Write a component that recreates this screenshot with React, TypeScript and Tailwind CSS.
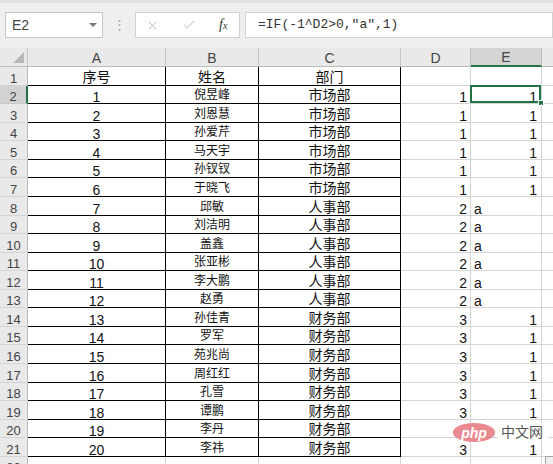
import { X, Check } from 'lucide-react';

interface SheetRow {
  no: string;
  name: string;
  dept: string;
  d: string;
  e: string;
}

const names = [
  '倪昱峰', '刘恩慧', '孙爱芹', '马天宇', '孙钗钗', '于晓飞',
  '邱敏', '刘洁明', '盖鑫', '张亚彬', '李大鹏', '赵勇',
  '孙佳青', '罗军', '苑兆尚', '周红红', '孔雪', '谭鹏', '李丹', '李祎',
];

const rows: SheetRow[] = names.map((name, i) => {
  const dept = i < 6 ? '市场部' : i < 12 ? '人事部' : '财务部';
  const d = i < 6 ? '1' : i < 12 ? '2' : '3';
  const e = i >= 6 && i < 12 ? 'a' : '1';
  return { no: String(i + 1), name, dept, d, e };
});

const columns = [
  { key: 'A', width: 'w-[138px]' },
  { key: 'B', width: 'w-[93px]' },
  { key: 'C', width: 'w-[142px]' },
  { key: 'D', width: 'w-[70px]' },
  { key: 'E', width: 'w-[71px]' },
];

function RowHeader({ n, active }: { n: number; active?: boolean }) {
  return (
    <div
      className={
        active
          ? 'w-[28px] shrink-0 bg-[#d2d2d2] border-r-2 border-r-[#217346] border-b border-b-[#c9c9c9] flex items-end justify-center text-[13px] leading-[13px] text-[#444]'
          : 'w-[28px] shrink-0 bg-[#e9e9e9] border-r border-r-[#bcbcbc] border-b border-b-[#d4d4d4] flex items-end justify-center text-[13px] leading-[13px] text-[#444]'
      }
    >
      {n}
    </div>
  );
}

export default function App() {
  return (
    <div className="relative w-[553px] h-[464px] overflow-hidden bg-white font-['Liberation_Sans','Noto_Sans_CJK_SC',sans-serif] text-[#111]">
      {/* Formula bar */}
      <div className="h-[48px] bg-[#efefef] border-t-[3px] border-t-[#e2e2e2] flex items-start pt-[9px]">
        <div className="ml-[5px] w-[98px] h-[26px] bg-white border border-[#c6c6c6] flex items-center justify-between pl-[6px] pr-[5px]">
          <span className="text-[14px] text-[#444]">E2</span>
          <span className="w-0 h-0 border-l-[4px] border-r-[4px] border-t-[4px] border-l-transparent border-r-transparent border-t-[#777]" />
        </div>
        <div className="w-[32px] h-[26px] flex items-center justify-center text-[13px] text-[#a6a6a6]">⋮</div>
        <div className="w-[105px] h-[26px] bg-white border border-[#d2d2d2] flex items-center">
          <X className="ml-[10px] w-[13px] h-[13px] text-[#b0b0b0]" strokeWidth={1.6} />
          <Check className="ml-[23px] w-[14px] h-[14px] text-[#b0b0b0]" strokeWidth={1.6} />
          <span className="ml-[23px] font-['Liberation_Serif',serif] italic text-[14px] text-[#333] leading-none">
            f<span className="text-[10px]">x</span>
          </span>
        </div>
        <div className="ml-[5px] flex-1 h-[26px] bg-white border border-[#d2d2d2] flex items-center pl-[12px] font-['Liberation_Mono',monospace] text-[13px] text-[#333]">
          =IF(-1^D2&gt;0,"a",1)
        </div>
      </div>

      {/* Column headers */}
      <div className="flex h-[19px]">
        <div className="relative w-[28px] shrink-0 bg-[#e9e9e9] border-r border-r-[#c6c6c6] border-b border-b-[#bcbcbc]">
          <svg className="absolute right-[3px] bottom-[3px]" width="11" height="11" viewBox="0 0 11 11">
            <polygon points="11,0 11,11 0,11" fill="#b7b7b7" />
          </svg>
        </div>
        {columns.map((c) => (
          <div
            key={c.key}
            className={`${c.width} shrink-0 flex items-end justify-center text-[14px] leading-[16px] text-[#444] ${
              c.key === 'E'
                ? 'bg-[#d4d4d4] border-r border-r-[#bcbcbc] border-b-2 border-b-[#217346]'
                : 'bg-[#e9e9e9] border-r border-r-[#c6c6c6] border-b border-b-[#bcbcbc]'
            }`}
          >
            {c.key}
          </div>
        ))}
        <div className="flex-1 bg-[#e9e9e9] border-b border-b-[#bcbcbc]" />
      </div>

      {/* Header row of the table */}
      <div className="flex h-[18.57px]">
        <RowHeader n={1} />
        <div className="w-[138px] shrink-0 border-r border-r-black border-b border-b-black flex items-end justify-center text-[14px] leading-[16px]">序号</div>
        <div className="w-[93px] shrink-0 border-r border-r-black border-b border-b-black flex items-end justify-center text-[14px] leading-[16px]">姓名</div>
        <div className="w-[142px] shrink-0 border-r border-r-black border-b border-b-black flex items-end justify-center text-[14px] leading-[16px]">部门</div>
        <div className="w-[70px] shrink-0 border-r border-r-[#d4d4d4] border-b border-b-[#d4d4d4]" />
        <div className="w-[71px] shrink-0 border-r border-r-[#d4d4d4] border-b border-b-[#d4d4d4]" />
        <div className="flex-1 border-b border-b-[#d4d4d4]" />
      </div>

      {/* Data rows */}
      {rows.map((r, i) => {
        // row 20 sits under the watermark, its D and E values are hidden there
        const hidden = i === 18;
        return (
          <div key={r.no} className="flex h-[18.57px]">
            <RowHeader n={i + 2} active={i === 0} />
            <div className="w-[138px] shrink-0 border-r border-r-black border-b border-b-black flex items-end justify-center text-[14px] leading-[12px]">
              {r.no}
            </div>
            <div className="w-[93px] shrink-0 border-r border-r-black border-b border-b-black flex items-end justify-center text-[12px] leading-[15px]">
              {r.name}
            </div>
            <div className="w-[142px] shrink-0 border-r border-r-black border-b border-b-black flex items-end justify-center text-[14px] leading-[16px]">
              {r.dept}
            </div>
            <div className="w-[70px] shrink-0 border-r border-r-[#d4d4d4] border-b border-b-[#d4d4d4] flex items-end justify-end pr-[3px] text-[14px] leading-[12px]">
              {hidden ? '' : r.d}
            </div>
            <div
              className={`relative w-[71px] shrink-0 border-r border-r-[#d4d4d4] border-b border-b-[#d4d4d4] flex items-end text-[14px] leading-[12px] ${
                r.e === 'a' ? 'justify-start pl-[3px]' : 'justify-end pr-[4px]'
              }`}
            >
              {hidden ? '' : r.e}
              {i === 0 && (
                <>
                  <div className="absolute left-[-1px] top-[-1px] right-0 bottom-0 border-2 border-[#217346]" />
                  <div className="absolute right-[-3px] bottom-[-3px] w-[6px] h-[6px] bg-[#217346] border border-white" />
                </>
              )}
            </div>
            <div className="flex-1 border-b border-b-[#d4d4d4]" />
          </div>
        );
      })}

      {/* Row 22, cut off at the bottom */}
      <div className="flex h-[18.57px]">
        <RowHeader n={22} />
        <div className="w-[138px] shrink-0 border-r border-r-[#d4d4d4]" />
        <div className="w-[93px] shrink-0 border-r border-r-[#d4d4d4]" />
        <div className="w-[142px] shrink-0 border-r border-r-[#d4d4d4]" />
        <div className="w-[70px] shrink-0 border-r border-r-[#d4d4d4]" />
        <div className="w-[71px] shrink-0 border-r border-r-[#d4d4d4]" />
        <div className="flex-1" />
      </div>

      {/* php 中文网 watermark */}
      <div className="absolute left-[453px] top-[423px] w-[42px] h-[19px] rounded-[50%] bg-[#e5767c]/85 flex items-center justify-center">
        <span className="font-['Liberation_Sans',sans-serif] italic font-bold text-[14px] leading-none text-white">php</span>
      </div>
      <div className="absolute left-[498px] top-[423px] h-[16px] pl-[3px] pr-[6px] bg-white/90 flex items-center text-[14px] leading-none text-[#555] font-['Noto_Sans_CJK_SC',sans-serif]">
        中文网
      </div>

      {/* bottom-right scroll button */}
      <div className="absolute left-[545px] top-[456px] w-[10px] h-[10px] bg-[#f0f0f0] border border-[#a6a6a6]" />
    </div>
  );
}
